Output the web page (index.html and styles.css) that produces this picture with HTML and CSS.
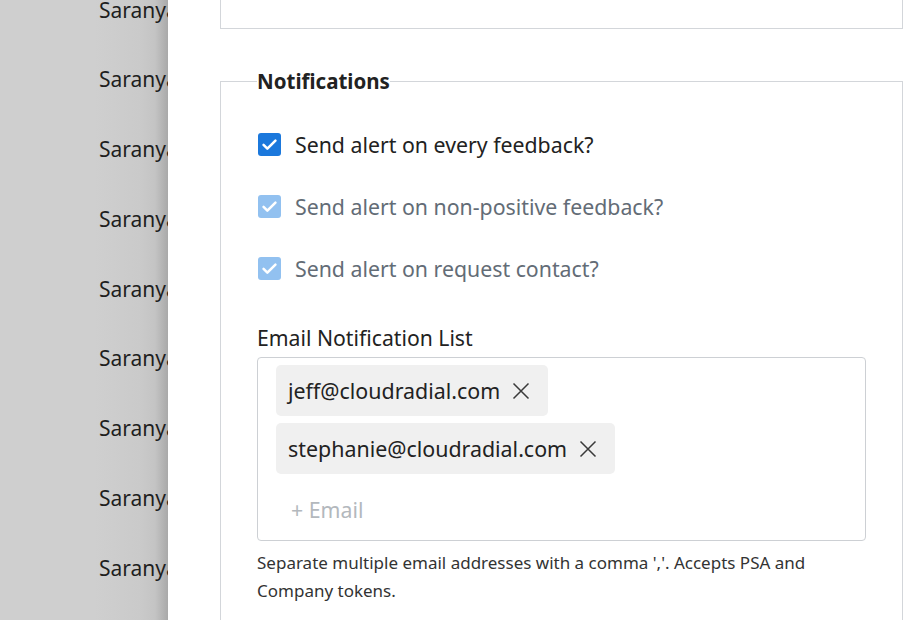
FILE: index.html
```html
<!DOCTYPE html>
<html lang="en">
<head>
<meta charset="utf-8">
<title>Survey settings</title>
<link rel="stylesheet" href="styles.css">
</head>
<body>
<div class="screen">
  <aside class="backdrop">
    <ul class="name-list">
      <li>Saranya</li>
      <li>Saranya</li>
      <li>Saranya</li>
      <li>Saranya</li>
      <li>Saranya</li>
      <li>Saranya</li>
      <li>Saranya</li>
      <li>Saranya</li>
      <li>Saranya</li>
    </ul>
  </aside>
  <main class="panel">
    <div class="card card-prev"></div>
    <fieldset class="card notif">
      <legend class="notif-title">Notifications</legend>
      <label class="check-row">
        <span class="box">
          <svg viewBox="0 0 24 24" width="19" height="19"><path d="M4.5 12.5l4.8 4.8L19.5 7" fill="none" stroke="#fff" stroke-width="3.2" stroke-linecap="round" stroke-linejoin="round"/></svg>
        </span>
        <span class="check-text">Send alert on every feedback?</span>
      </label>
      <label class="check-row is-disabled">
        <span class="box">
          <svg viewBox="0 0 24 24" width="19" height="19"><path d="M4.5 12.5l4.8 4.8L19.5 7" fill="none" stroke="#fff" stroke-width="3.2" stroke-linecap="round" stroke-linejoin="round"/></svg>
        </span>
        <span class="check-text">Send alert on non-positive feedback?</span>
      </label>
      <label class="check-row is-disabled">
        <span class="box">
          <svg viewBox="0 0 24 24" width="19" height="19"><path d="M4.5 12.5l4.8 4.8L19.5 7" fill="none" stroke="#fff" stroke-width="3.2" stroke-linecap="round" stroke-linejoin="round"/></svg>
        </span>
        <span class="check-text">Send alert on request contact?</span>
      </label>

      <div class="field">
        <div class="field-label">Email Notification List</div>
        <div class="tag-input">
          <span class="chip">jeff@cloudradial.com
            <svg class="chip-x" viewBox="0 0 20 20" width="20" height="20"><path d="M2.5 2.5l15 15M17.5 2.5l-15 15" stroke="#3a3a3a" stroke-width="1.5" fill="none"/></svg>
          </span>
          <span class="chip">stephanie@cloudradial.com
            <svg class="chip-x" viewBox="0 0 20 20" width="20" height="20"><path d="M2.5 2.5l15 15M17.5 2.5l-15 15" stroke="#3a3a3a" stroke-width="1.5" fill="none"/></svg>
          </span>
          <span class="add-email">+ Email</span>
        </div>
        <p class="hint">Separate multiple email addresses with a comma ','. Accepts PSA and Company tokens.</p>
      </div>
    </fieldset>
  </main>
</div>
</body>
</html>
```
FILE: styles.css
```css
html, body {
  margin: 0;
  padding: 0;
  height: 100%;
  overflow: hidden;
}

body {
  font-family: "Noto Sans", "Open Sans", sans-serif;
  color: #222;
}

.screen {
  display: flex;
  height: 620px;
}

/* dimmed page behind the side panel */
.backdrop {
  width: 168px;
  flex: none;
  overflow: hidden;
  background: linear-gradient(to right, #cfcfcf 0, #cfcfcf 95px, #cacaca 140px, #c4c4c4 155px, #a9a9a9 168px);
}

.name-list {
  list-style: none;
  margin: -24.5px 0 0 0;
  padding: 0 0 0 99px;
  white-space: nowrap;
}

.name-list li {
  height: 69.75px;
  line-height: 69.75px;
  font-size: 21px;
  color: #1e1e1e;
}

/* side panel */
.panel {
  flex: 1;
  background: #fff;
  padding: 0 13px 0 52px;
  display: flex;
  flex-direction: column;
  gap: 39px;
}

.card {
  border: 1px solid #d3d6da;
  box-sizing: border-box;
}

.card-prev {
  height: 29px;
  flex: none;
  border-top: none;
}

.notif {
  margin: 0;
  min-width: 0;
  padding: 34px 36px 0 36px;
  border-bottom: none;
  flex: 1;
}

.notif-title {
  padding: 0;
  font-size: 20.5px;
  font-weight: 700;
  color: #222;
  line-height: 27px;
}

.check-row {
  display: flex;
  align-items: center;
  gap: 14px;
  height: 30px;
  margin-bottom: 32px;
  font-size: 21.3px;
  color: #222;
}

.box {
  width: 23px;
  height: 23px;
  border-radius: 3px;
  background: #1b78dc;
  display: flex;
  align-items: center;
  justify-content: center;
  flex: none;
  margin-left: 1px;
}

.is-disabled .box {
  background: #92c1f0;
}

.is-disabled .check-text {
  color: #636c76;
}

.field {
  margin-top: 41px;
}

.field-label {
  font-size: 21.2px;
  line-height: 28px;
  margin-bottom: 5px;
}

.tag-input {
  border: 1px solid #cdd0d4;
  border-radius: 4px;
  height: 184px;
  box-sizing: border-box;
  padding: 7px 18px;
  display: flex;
  flex-direction: column;
  align-items: flex-start;
  gap: 7px;
}

.chip {
  display: flex;
  align-items: center;
  gap: 11px;
  height: 51px;
  padding: 0 17px 0 12px;
  background: #f0f0f0;
  border-radius: 5px;
  font-size: 21.4px;
  color: #222;
}

.chip-x {
  flex: none;
}

.add-email {
  margin: 15px 0 0 15px;
  font-size: 21.3px;
  color: #b3b8bd;
  line-height: 28px;
}

.hint {
  margin: 8px 0 0 0;
  font-size: 17px;
  line-height: 28px;
  color: #333;
  max-width: 600px;
}
```
